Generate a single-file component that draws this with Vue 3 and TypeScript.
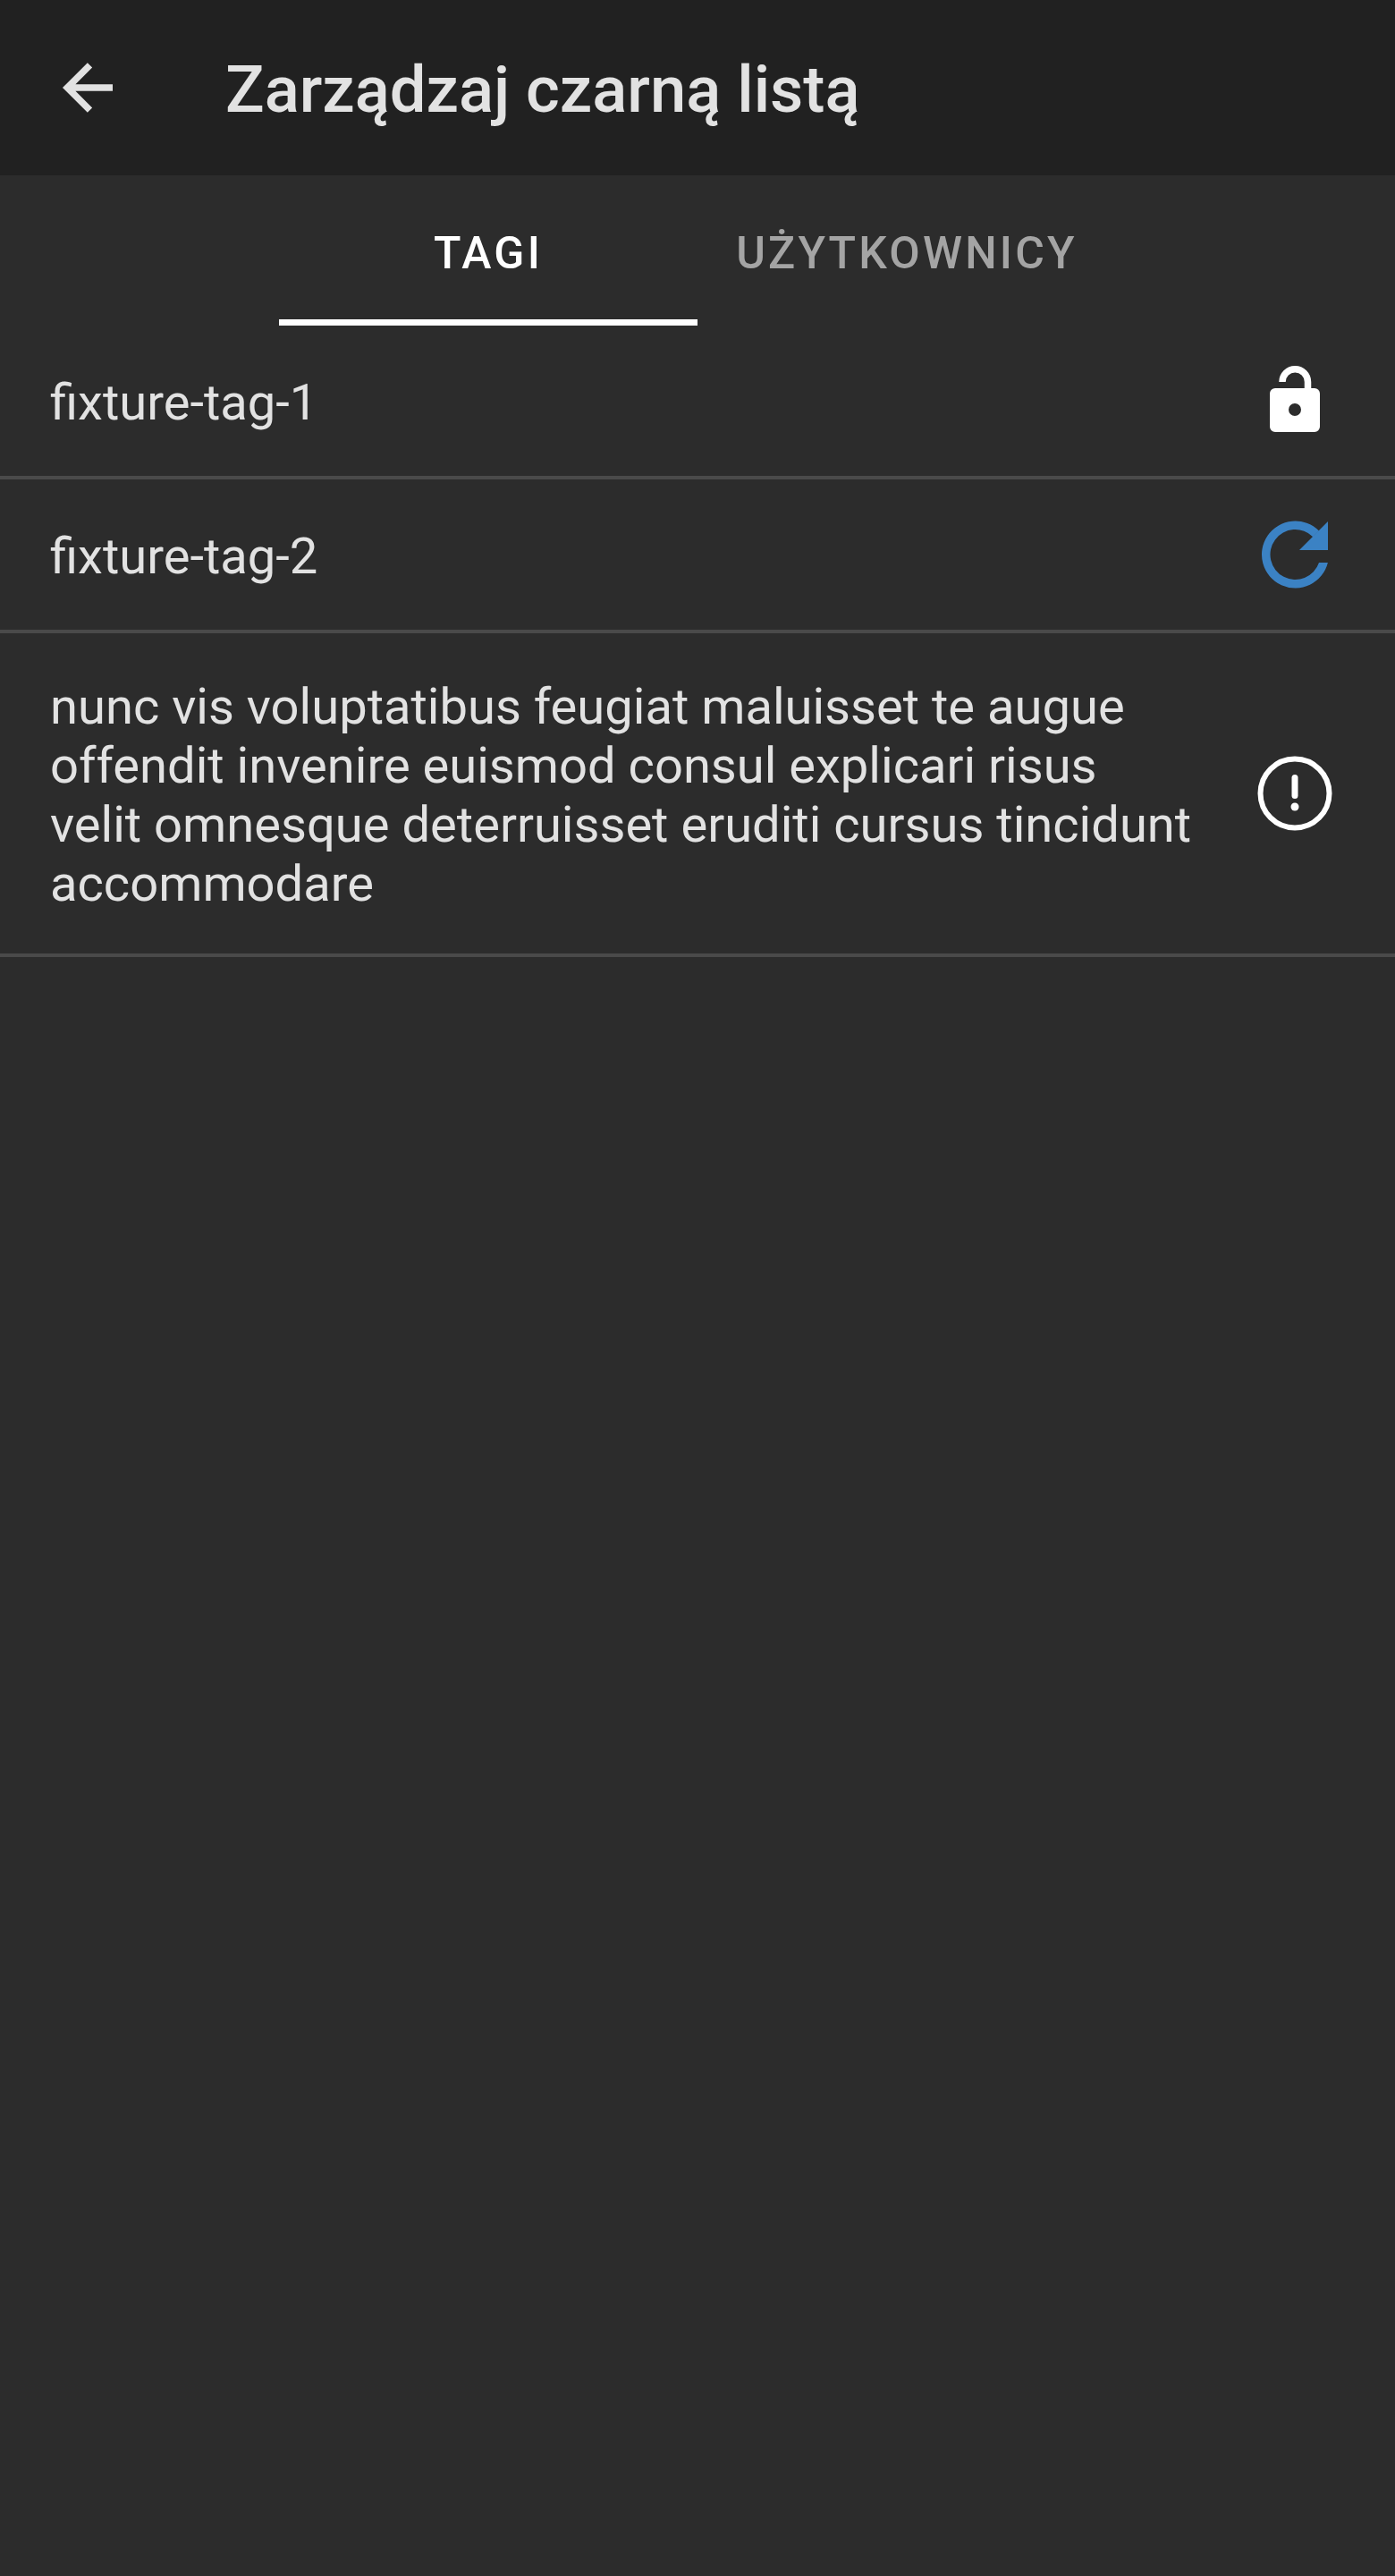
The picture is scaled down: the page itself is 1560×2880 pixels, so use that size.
<script setup lang="ts">
type RowIcon = 'unlock' | 'refresh' | 'alert'

interface BlacklistRow {
  id: string
  label: string
  icon: RowIcon
}

const rows: BlacklistRow[] = [
  { id: 'tag-1', label: 'fixture-tag-1', icon: 'unlock' },
  { id: 'tag-2', label: 'fixture-tag-2', icon: 'refresh' },
  {
    id: 'tag-3',
    label: 'nunc vis voluptatibus feugiat maluisset te augue offendit invenire euismod consul explicari risus velit omnesque deterruisset eruditi cursus tincidunt accommodare',
    icon: 'alert',
  },
]
</script>

<template>
  <div class="screen">
    <header class="toolbar">
      <svg class="toolbar__back" width="66" height="66" viewBox="0 0 66 66" aria-hidden="true">
        <path d="M61 33H12M35.500 7.800L10.300 33L35.500 58.200" fill="none" stroke="#e2e2e2" stroke-width="7.500" />
      </svg>
      <h1 class="toolbar__title">Zarządzaj czarną listą</h1>
    </header>

    <nav class="tabs">
      <div class="tabs__tab tabs__tab--active">TAGI</div>
      <div class="tabs__tab">UŻYTKOWNICY</div>
    </nav>

    <ul class="list">
      <li v-for="row in rows" :key="row.id" class="list__row">
        <span class="list__label">{{ row.label }}</span>
        <span class="list__icon">
          <svg v-if="row.icon === 'unlock'" width="88" height="88" viewBox="0 0 88 88" aria-hidden="true">
            <path d="M30 23A14.250 14.250 0 0 1 58.500 23V31" fill="none" stroke="#fff" stroke-width="7.500" />
            <path fill-rule="evenodd" fill="#fff" d="M22 30H66A6 6 0 0 1 72 36V73A6 6 0 0 1 66 79H22A6 6 0 0 1 16 73V36A6 6 0 0 1 22 30ZM44 47A7 7 0 1 0 44 61A7 7 0 1 0 44 47Z" />
          </svg>
          <svg v-else-if="row.icon === 'refresh'" width="88" height="88" viewBox="0 0 88 88" aria-hidden="true">
            <path d="M80.900 53A37.500 37.500 0 1 1 71 17.500L64.300 24.200A28 28 0 1 0 71 53Z" fill="#3b82c4" />
            <path d="M81 7V39H49Z" fill="#3b82c4" />
          </svg>
          <svg v-else width="88" height="88" viewBox="0 0 88 88" aria-hidden="true">
            <circle cx="44" cy="44" r="38.500" fill="none" stroke="#fff" stroke-width="6" />
            <path d="M44 26.500V46.500" fill="none" stroke="#fff" stroke-width="7" stroke-linecap="round" />
            <circle cx="44" cy="59" r="4.500" fill="#fff" />
          </svg>
        </span>
      </li>
    </ul>
  </div>
</template>

<style scoped>
.screen {
  display: flex;
  flex-direction: column;
  width: 1560px;
  height: 2880px;
  overflow: hidden;
  background: #2c2c2c;
  font-family: Roboto, "Liberation Sans", sans-serif;
}

.toolbar {
  display: flex;
  flex-shrink: 0;
  align-items: center;
  height: 196px;
  padding-left: 65px;
  box-sizing: border-box;
  background: #212121;
}
.toolbar__back { flex-shrink: 0; }
.toolbar__title {
  margin: 5px 0 0 121px;
  font-size: 72.400px;
  font-weight: 500;
  line-height: 88px;
  color: #e2e2e2;
}

.tabs {
  display: flex;
  flex-shrink: 0;
  justify-content: center;
  height: 168px;
}
.tabs__tab {
  box-sizing: border-box;
  width: 468px;
  padding-top: 58px;
  text-align: center;
  font-size: 50px;
  font-weight: 500;
  line-height: 58px;
  letter-spacing: 3.200px;
  color: #a4a4a4;
}
.tabs__tab--active {
  color: #fff;
  border-bottom: 7px solid #fff;
}

.list {
  margin: 0;
  padding: 0;
  list-style: none;
}
.list__row {
  display: flex;
  align-items: center;
  justify-content: space-between;
  box-sizing: border-box;
  min-height: 172px;
  padding: 49px 68px 45px 56px;
  border-bottom: 4px solid #4a4a4a;
}
.list__label {
  width: 1281px;
  font-size: 56.100px;
  line-height: 66px;
  color: #e2e2e2;
}
.list__icon {
  display: flex;
  flex-shrink: 0;
  margin: -22px 0 -18px;
}
</style>
